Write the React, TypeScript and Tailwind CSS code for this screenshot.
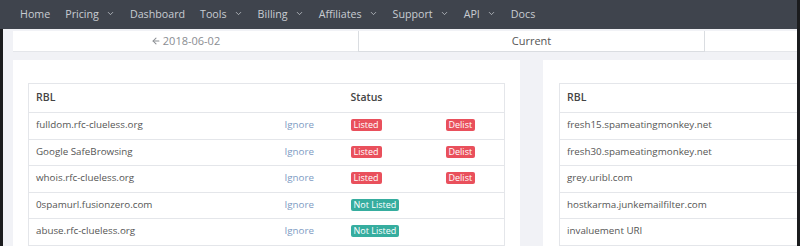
import { ArrowLeft, ChevronDown } from "lucide-react";

type Row = { name: string; listed: boolean };

const navItems: { label: string; menu?: boolean }[] = [
  { label: "Home" },
  { label: "Pricing", menu: true },
  { label: "Dashboard" },
  { label: "Tools", menu: true },
  { label: "Billing", menu: true },
  { label: "Affiliates", menu: true },
  { label: "Support", menu: true },
  { label: "API", menu: true },
  { label: "Docs" },
];

const leftRows: Row[] = [
  { name: "fulldom.rfc-clueless.org", listed: true },
  { name: "Google SafeBrowsing", listed: true },
  { name: "whois.rfc-clueless.org", listed: true },
  { name: "0spamurl.fusionzero.com", listed: false },
  { name: "abuse.rfc-clueless.org", listed: false },
];

const rightRows = [
  "fresh15.spameatingmonkey.net",
  "fresh30.spameatingmonkey.net",
  "grey.uribl.com",
  "hostkarma.junkemailfilter.com",
  "invaluement URI",
];

function Label({ color, children }: { color: "red" | "teal"; children: string }) {
  return (
    <span
      className={`inline-block rounded-[2px] px-[3px] text-[9px] leading-[12px] text-white ${
        color === "red" ? "bg-[#e9505c]" : "bg-[#36ad9f]"
      }`}
    >
      {children}
    </span>
  );
}

export default function App() {
  return (
    <div
      className="flex h-[246px] w-[800px] overflow-hidden bg-[#f1f2f6] text-[#555]"
      style={{ fontFamily: '"Open Sans", "Noto Sans", sans-serif' }}
    >
      <div className="flex-1 min-w-0 flex flex-col">
        {/* Top nav */}
        <nav className="flex h-[29px] shrink-0 items-center gap-[15px] bg-[#3f444d] pb-[1px] pl-[20px] text-[10.7px] text-[#c8ccd2]">
          {navItems.map((item) => (
            <span key={item.label} className="flex items-center gap-[7px]">
              {item.label}
              {item.menu && <ChevronDown className="h-[9px] w-[9px]" strokeWidth={2} />}
            </span>
          ))}
        </nav>

        <div className="flex flex-1 min-h-0">
          <div className="w-[3px] shrink-0 bg-[#1b1c1e]" />
          <div className="flex-1 min-w-0">
            {/* Date pager */}
            <div className="ml-[10px] mt-[2px] flex h-[21px] bg-white text-[11px]">
              <div className="flex w-[345px] items-center justify-center gap-[2px] border-b border-[#e4e6ea] text-[#8a8d92]">
                <ArrowLeft className="h-[10px] w-[10px]" strokeWidth={2.5} />
                2018-06-02
              </div>
              <div className="flex w-[347px] items-center justify-center border-x border-b border-[#dadde1] text-[#555]">
                Current
              </div>
              <div className="flex-1 border-b border-[#e4e6ea]" />
            </div>

            {/* Cards */}
            <div className="mt-[8px] ml-[10px] flex gap-[23px]">
              <div className="w-[507px] shrink-0 bg-white px-[15px] pt-[23px]">
                <table className="w-full border-collapse border border-[#e4e6ea] text-[9.8px]">
                  <thead>
                    <tr className="h-[29px] text-left">
                      <th className="pl-[7px] text-[10.5px] font-semibold text-[#444]">RBL</th>
                      <th className="w-[66px]" />
                      <th className="w-[95px] pl-[7px] text-[10.5px] font-semibold text-[#444]">Status</th>
                      <th className="w-[66px]" />
                    </tr>
                  </thead>
                  <tbody>
                    {leftRows.map((r) => (
                      <tr key={r.name} className="h-[26.5px] border-t border-[#e4e6ea]">
                        <td className="pl-[7px]">{r.name}</td>
                        <td className="pl-[7px] text-[#7d9bc3]">Ignore</td>
                        <td className="pl-[7px]">
                          <Label color={r.listed ? "red" : "teal"}>{r.listed ? "Listed" : "Not Listed"}</Label>
                        </td>
                        <td className="pl-[7px]">{r.listed && <Label color="red">Delist</Label>}</td>
                      </tr>
                    ))}
                  </tbody>
                </table>
              </div>

              <div className="flex-1 min-w-0 bg-white pl-[16px] pt-[23px]">
                <table className="w-full border-collapse border border-r-0 border-[#e4e6ea] text-[9.8px]">
                  <thead>
                    <tr className="h-[29px] text-left">
                      <th className="pl-[7px] text-[10.5px] font-semibold text-[#444]">RBL</th>
                    </tr>
                  </thead>
                  <tbody>
                    {rightRows.map((name) => (
                      <tr key={name} className="h-[26.5px] border-t border-[#e4e6ea]">
                        <td className="pl-[7px]">{name}</td>
                      </tr>
                    ))}
                  </tbody>
                </table>
              </div>
            </div>
          </div>
        </div>
      </div>
      <div className="w-[3px] shrink-0 bg-[#1b1c1e]" />
    </div>
  );
}
